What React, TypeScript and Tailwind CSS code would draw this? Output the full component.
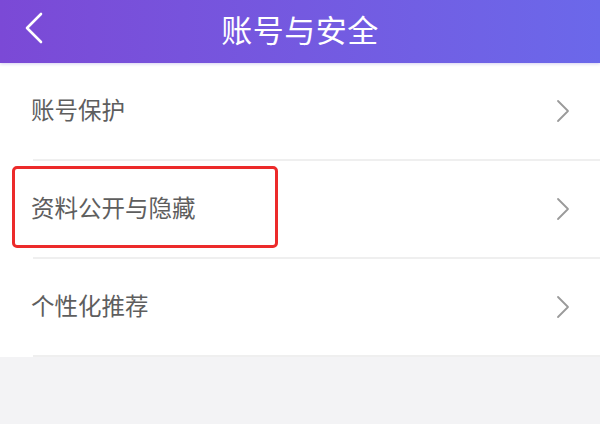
const items = ["账号保护", "资料公开与隐藏", "个性化推荐"];

function BackArrow() {
  return (
    <svg className="absolute left-[24px] top-[12px]" width="20" height="32" viewBox="0 0 20 32" fill="none">
      <path d="M17 2 L3 16 L17 30" stroke="white" strokeWidth="2.6" strokeLinecap="round" strokeLinejoin="round" />
    </svg>
  );
}

function RowArrow() {
  return (
    <svg width="14" height="24" viewBox="0 0 14 24" fill="none">
      <path d="M2 2 L12 12 L2 22" stroke="#9a9a9a" strokeWidth="1.8" strokeLinecap="round" strokeLinejoin="round" />
    </svg>
  );
}

export default function App() {
  return (
    <div
      className="w-[600px] h-[424px] bg-[#f3f3f5] overflow-hidden"
      style={{ fontFamily: '"Noto Sans CJK SC", "Noto Sans", sans-serif' }}
    >
      <div className="relative h-[63px] flex items-center justify-center bg-gradient-to-r from-[#7b49d6] to-[#6b68ea] shadow-[0_1px_3px_rgba(90,70,200,0.25)]">
        <BackArrow />
        <h1 className="text-white text-[31px] leading-none tracking-[0.5px] -mt-[6px]">
          账号与安全
        </h1>
      </div>

      <div className="bg-white">
        {items.map((label, i) => (
          <div key={label} className="relative">
            <div className="h-[96px] flex items-center justify-between pl-[31px] pr-[30px]">
              <span className="text-[#5e5e5e] text-[23.5px] leading-none -mt-[2px]">{label}</span>
              <RowArrow />
            </div>
            <div className="ml-[33px] h-[2px] bg-[#efefef]" />
            {i === 1 && (
              <div className="absolute left-[12px] top-[5px] w-[266px] h-[82px] border-[3px] border-[#ec2a2a] rounded-[5px]" />
            )}
          </div>
        ))}
      </div>
    </div>
  );
}
